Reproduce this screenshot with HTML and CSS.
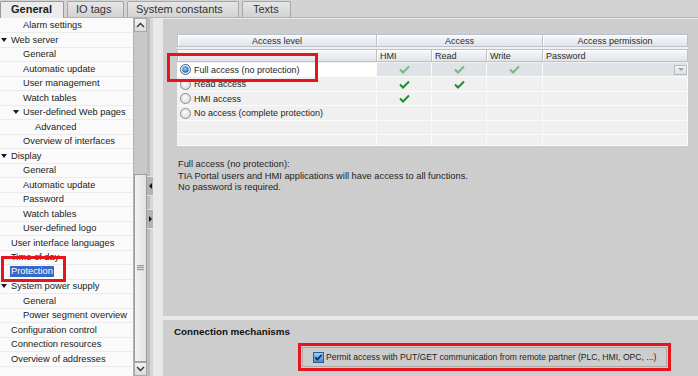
FILE: index.html
```html
<!DOCTYPE html>
<html lang="en">
<head>
  <meta charset="UTF-8">
  <title>Protection - Properties</title>
  <link rel="stylesheet" href="styles.css">
</head>
<body>

  <nav class="tabbar">
    <div class="tab active">General</div>
    <div class="tab">IO tags</div>
    <div class="tab">System constants</div>
    <div class="tab">Texts</div>
  </nav>

  <div class="main">
    <aside class="tree-pane">
      <ul class="tree">
        <li class="l1"><span class="tw"></span>Alarm settings</li>
        <li class="l0 open"><span class="tw"></span>Web server</li>
        <li class="l1"><span class="tw"></span>General</li>
        <li class="l1"><span class="tw"></span>Automatic update</li>
        <li class="l1"><span class="tw"></span>User management</li>
        <li class="l1"><span class="tw"></span>Watch tables</li>
        <li class="l1 open"><span class="tw"></span>User-defined Web pages</li>
        <li class="l2"><span class="tw"></span>Advanced</li>
        <li class="l1"><span class="tw"></span>Overview of interfaces</li>
        <li class="l0 open"><span class="tw"></span>Display</li>
        <li class="l1"><span class="tw"></span>General</li>
        <li class="l1"><span class="tw"></span>Automatic update</li>
        <li class="l1"><span class="tw"></span>Password</li>
        <li class="l1"><span class="tw"></span>Watch tables</li>
        <li class="l1"><span class="tw"></span>User-defined logo</li>
        <li class="l0"><span class="tw"></span>User interface languages</li>
        <li class="l0"><span class="tw"></span>Time of day</li>
        <li class="l0 selected"><span class="tw"></span><span class="sel">Protection</span></li>
        <li class="l0 open"><span class="tw"></span>System power supply</li>
        <li class="l1"><span class="tw"></span>General</li>
        <li class="l1"><span class="tw"></span>Power segment overview</li>
        <li class="l0"><span class="tw"></span>Configuration control</li>
        <li class="l0"><span class="tw"></span>Connection resources</li>
        <li class="l0"><span class="tw"></span>Overview of addresses</li>
      </ul>

      <div class="vscroll">
        <div class="sb-btn">
          <svg width="9" height="6" viewBox="0 0 9 6"><path d="M1 5 L4.5 1.5 L8 5" fill="none" stroke="#333" stroke-width="1.4"/></svg>
        </div>
        <div class="sb-track"></div>
        <div class="sb-thumb"><span class="grip"></span></div>
        <div class="sb-btn">
          <svg width="9" height="6" viewBox="0 0 9 6"><path d="M1 1 L4.5 4.5 L8 1" fill="none" stroke="#333" stroke-width="1.4"/></svg>
        </div>
      </div>
    </aside>

    <div class="splitter">
      <div class="split-btn"><span class="tri-left"></span></div>
      <div class="split-btn"><span class="tri-right"></span></div>
    </div>

    <div class="content">
      <section class="panel panel-top">
        <div class="grid">
          <div class="hd span1">Access level</div>
          <div class="hd span3">Access</div>
          <div class="hd">Access permission</div>

          <div class="hd sub"></div>
          <div class="hd sub left">HMI</div>
          <div class="hd sub left">Read</div>
          <div class="hd sub left">Write</div>
          <div class="hd sub left">Password</div>

          <div class="cell level current">
            <svg class="radio" width="11" height="11" viewBox="0 0 11 11">
              <defs>
                <radialGradient id="rsel" cx="0.45" cy="0.4" r="0.6">
                  <stop offset="0" stop-color="#8fd0ff"/>
                  <stop offset="1" stop-color="#1660b8"/>
                </radialGradient>
              </defs>
              <circle cx="5.5" cy="5.5" r="5" fill="#eef3f8" stroke="#3b5f88"/>
              <circle cx="5.5" cy="5.5" r="3.2" fill="url(#rsel)"/>
            </svg>
            Full access (no protection)
          </div>
          <div class="cell sel-row"><svg class="tick light" width="11" height="9" viewBox="0 0 11 9"><path d="M1 4.5 L4 7.5 L10 1.5"/></svg></div>
          <div class="cell sel-row"><svg class="tick light" width="11" height="9" viewBox="0 0 11 9"><path d="M1 4.5 L4 7.5 L10 1.5"/></svg></div>
          <div class="cell sel-row"><svg class="tick light" width="11" height="9" viewBox="0 0 11 9"><path d="M1 4.5 L4 7.5 L10 1.5"/></svg></div>
          <div class="cell sel-row pw"><span class="dd"><span class="dd-tri"></span></span></div>

          <div class="cell level"><span class="radio-off"></span>Read access</div>
          <div class="cell"><svg class="tick" width="11" height="9" viewBox="0 0 11 9"><path d="M1 4.5 L4 7.5 L10 1.5"/></svg></div>
          <div class="cell"><svg class="tick" width="11" height="9" viewBox="0 0 11 9"><path d="M1 4.5 L4 7.5 L10 1.5"/></svg></div>
          <div class="cell"></div>
          <div class="cell"></div>

          <div class="cell level"><span class="radio-off"></span>HMI access</div>
          <div class="cell"><svg class="tick" width="11" height="9" viewBox="0 0 11 9"><path d="M1 4.5 L4 7.5 L10 1.5"/></svg></div>
          <div class="cell"></div>
          <div class="cell"></div>
          <div class="cell"></div>

          <div class="cell level"><span class="radio-off"></span>No access (complete protection)</div>
          <div class="cell"></div>
          <div class="cell"></div>
          <div class="cell"></div>
          <div class="cell"></div>

          <div class="cell"></div>
          <div class="cell"></div>
          <div class="cell"></div>
          <div class="cell"></div>
          <div class="cell"></div>

          <div class="cell short"></div>
          <div class="cell short"></div>
          <div class="cell short"></div>
          <div class="cell short"></div>
          <div class="cell short"></div>
        </div>

        <div class="desc">
          <p>Full access (no protection):</p>
          <p>TIA Portal users and HMI applications will have access to all functions.</p>
          <p>No password is required.</p>
        </div>
      </section>

      <section class="panel panel-bottom">
        <h3>Connection mechanisms</h3>
        <div class="option mark-box">
          <label class="check-field">
            <svg class="checkbox" width="11" height="11" viewBox="0 0 11 11">
              <defs>
                <linearGradient id="cbg" x1="0" y1="0" x2="0" y2="1">
                  <stop offset="0" stop-color="#9fd2f7"/>
                  <stop offset="1" stop-color="#3a8ad6"/>
                </linearGradient>
              </defs>
              <rect x="0.5" y="0.5" width="10" height="10" fill="url(#cbg)" stroke="#2d5c8c"/>
              <path d="M2.3 5.4 L4.5 7.6 L8.7 2.8" fill="none" stroke="#10264a" stroke-width="1.6"/>
            </svg>
            Permit access with PUT/GET communication from remote partner (PLC, HMI, OPC, ...)
          </label>
        </div>
      </section>
    </div>
  </div>

  <!-- annotation boxes -->
  <div class="mark mark-tree"></div>
  <div class="mark mark-level"></div>

</body>
</html>
```

FILE: styles.css
```css
body {
  margin: 0;
  width: 698px;
  height: 376px;
  overflow: hidden;
  position: relative;
  background: #e8e8e8;
  font-family: 'Liberation Sans', Arial, sans-serif;
  font-size: 9.3px;
  color: #1e1e1e;
}

/* Tabs */
.tabbar {
  display: flex;
  align-items: flex-end;
  gap: 3px;
  height: 18px;
  box-sizing: border-box;
  background: #d3d3d3;
  border-bottom: 1px solid #b4b4b4;
}
.tab {
  height: 16px;
  box-sizing: border-box;
  padding: 0 10px;
  font-size: 11px;
  line-height: 15px;
  color: #333;
  background: linear-gradient(#e6e6e6, #d2d2d2);
  border: 1px solid #a6a6a6;
  border-bottom: none;
  border-radius: 2px 2px 0 0;
}
.tab:nth-child(2) { width: 57px; padding: 0 0 0 8px; }
.tab:nth-child(3) { width: 112px; padding: 0 0 0 8px; }
.tab:nth-child(4) { width: 49px; padding: 0 0 0 10px; }
.tab.active {
  width: 64px;
  padding-left: 10px;
  font-weight: bold;
  color: #222;
  background: #ececec;
  border-color: #9a9a9a;
  height: 17px;
  margin-bottom: -1px;
}

.main {
  display: flex;
  height: 358px;
}

/* Tree */
.tree-pane {
  display: flex;
  width: 147px;
  background: #fafafa;
}
.tree {
  list-style: none;
  margin: 0;
  padding: 0.5px 0 0;
  width: 133px;
  overflow: hidden;
}
.tree li {
  display: flex;
  align-items: center;
  height: 14.5px;
  box-sizing: border-box;
  border-bottom: 1px solid #ebebeb;
  white-space: nowrap;
  color: #1a1a1a;
}
.tree .l1 { padding-left: 12px; }
.tree .l2 { padding-left: 24px; }
.tw {
  display: inline-block;
  width: 11px;
  flex: none;
}
.tree .open .tw::before {
  content: "";
  display: block;
  margin-left: 1px;
  width: 0;
  height: 0;
  border-left: 3px solid transparent;
  border-right: 3px solid transparent;
  border-top: 4px solid #1a1a1a;
}
.tree .sel {
  background: #3568c8;
  color: #fff;
  margin-left: -1px;
  padding: 0 1px;
  line-height: 11px;
}

/* Scrollbar */
.vscroll {
  width: 14px;
  display: flex;
  flex-direction: column;
  background: #c8c8c8;
  border-left: 1px solid #b0b0b0;
  box-sizing: border-box;
}
.sb-btn {
  height: 14px;
  flex: none;
  display: flex;
  align-items: center;
  justify-content: center;
  background: linear-gradient(#f2f2f2, #dcdcdc);
  border: 1px solid #a8a8a8;
  box-sizing: border-box;
}
.sb-track {
  height: 142px;
  flex: none;
}
.sb-thumb {
  flex: 1;
  display: flex;
  align-items: center;
  justify-content: center;
  background: linear-gradient(to right, #f2f2f2, #e2e2e2);
  border: 1px solid #9c9c9c;
  box-sizing: border-box;
}
.grip {
  width: 7px;
  height: 6px;
  background: repeating-linear-gradient(#9a9a9a 0 1px, #d8d8d8 1px 2px);
}

/* Splitter */
.splitter {
  width: 6px;
  background: linear-gradient(to right, #bdbdbd 0 3px, #d6d6d6 3px);
  display: flex;
  flex-direction: column;
  padding-top: 158px;
  gap: 13px;
}
.split-btn {
  height: 18px;
  background: #b2b2b2;
  border-top: 1px solid #e4e4e4;
  border-bottom: 1px solid #e4e4e4;
  display: flex;
  align-items: center;
  justify-content: center;
}
.tri-left {
  width: 0; height: 0;
  border-top: 3px solid transparent;
  border-bottom: 3px solid transparent;
  border-right: 3px solid #111;
}
.tri-right {
  width: 0; height: 0;
  border-top: 3px solid transparent;
  border-bottom: 3px solid transparent;
  border-left: 3px solid #111;
}

/* Content */
.content {
  flex: 1;
  display: flex;
  flex-direction: column;
  gap: 4px;
  padding: 1px 0 0 10px;
  background: #e9e9e9;
}
.panel {
  background: #cdcdcd;
}
.panel-top {
  height: 297px;
  padding: 15px 0 0 14px;
  box-sizing: border-box;
}
.panel-bottom {
  flex: 1;
  padding: 6px 0 0 11px;
}

/* Access grid */
.grid {
  display: grid;
  width: 511px;
  grid-template-columns: 200px 55px 55px 56px 145px;
  grid-template-rows: 13px 15px 15px 14.6px 14.6px 14.6px 14.6px 11px;
  background: #f0f0f0;
  font-size: 9px;
}
.hd {
  display: flex;
  align-items: center;
  justify-content: center;
  background: linear-gradient(#f7f8fa, #e0e5ea);
  border: 1px solid #b9c2ca;
  border-left: none;
  box-shadow: inset 1px 1px 0 #ffffff;
  color: #2a2a2a;
}
.hd:first-child { border-left: 1px solid #b9c2ca; }
.span3 { grid-column: span 3; }
.hd.sub {
  margin-top: 2px;
}
.hd.sub:nth-child(4) { border-left: 1px solid #b9c2ca; }
.hd.left {
  justify-content: flex-start;
  padding-left: 3px;
}

.cell {
  display: flex;
  align-items: center;
  justify-content: center;
  border-right: 1px solid #fbfbfb;
  border-bottom: 1px solid #fbfbfb;
  box-sizing: border-box;
  margin-top: 1px;
}
.cell.level {
  justify-content: flex-start;
  padding-left: 3px;
  gap: 3px;
  color: #1e1e1e;
}
.cell.current { background: #ffffff; }
.cell.sel-row { background: #dfe2e6; }
.cell.pw { justify-content: flex-end; }
.dd {
  width: 13px;
  height: 10px;
  box-sizing: border-box;
  border: 1px solid #b4bac1;
  background: linear-gradient(#f3f4f6, #dde1e5);
  display: flex;
  align-items: center;
  justify-content: center;
}
.dd-tri {
  width: 0; height: 0;
  border-left: 3px solid transparent;
  border-right: 3px solid transparent;
  border-top: 3px solid #9aa0a6;
}
.radio-off {
  width: 11px;
  height: 11px;
  box-sizing: border-box;
  border-radius: 50%;
  border: 1px solid #8c8c8c;
  background: radial-gradient(circle at 45% 40%, #fbfbfb, #d4d4d4);
  flex: none;
}
.radio { flex: none; }
.tick path {
  fill: none;
  stroke: #1d8f33;
  stroke-width: 2;
}
.tick.light path { stroke: #6fbd80; }

.desc {
  margin-top: 13px;
  padding-left: 1px;
  line-height: 11.5px;
}
.desc p { margin: 0; }

/* Connection mechanisms */
.panel-bottom h3 {
  margin: 0;
  font-size: 9.8px;
  line-height: 12px;
  font-weight: bold;
  color: #111;
}
.option {
  width: 373px;
  height: 28px;
  margin: 5px 0 0 124px;
  box-sizing: border-box;
  padding: 1px;
}
.check-field {
  display: flex;
  align-items: center;
  gap: 2px;
  height: 100%;
  box-sizing: border-box;
  border: 1px solid #a9a9a9;
  padding-left: 10px;
  white-space: nowrap;
  font-size: 8.6px;
  color: #1e1e1e;
}
.checkbox { flex: none; }

/* Red annotation frames */
.mark-box {
  border: 3px solid #e8141c;
}
.mark {
  position: absolute;
  border: 3px solid #e8141c;
  box-sizing: border-box;
}
.mark-tree {
  left: 1px;
  top: 256px;
  width: 65px;
  height: 26px;
}
.mark-level {
  left: 167px;
  top: 53px;
  width: 151px;
  height: 29px;
}
```
